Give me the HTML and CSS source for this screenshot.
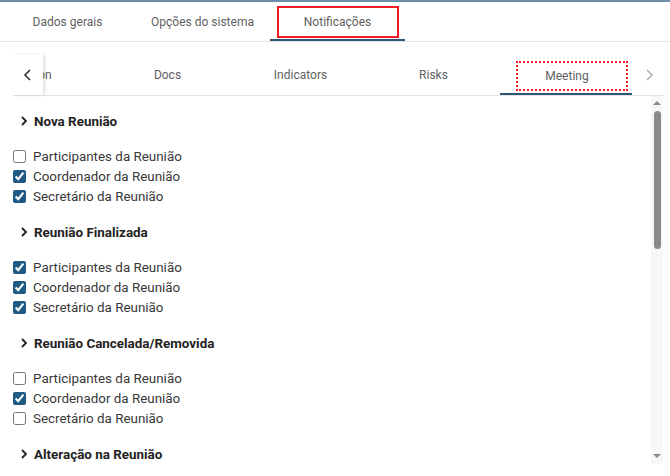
FILE: index.html
```html
<!DOCTYPE html>
<html lang="pt">
<head>
    <meta charset="UTF-8">
    <title>Notificações</title>
    <link rel="stylesheet" href="styles.css">
</head>
<body>
<div class="main-tabs">
    <div class="main-tab">Dados gerais</div>
    <div class="main-tab">Opções do sistema</div>
    <div class="main-tab active"><span class="mark-solid">Notificações</span></div>
</div>

<div class="panel">
    <div class="sub-tabs">
        <button class="nav prev">
            <svg width="9" height="12" viewBox="0 0 9 12"><path d="M7 1 L2 6 L7 11" fill="none" stroke="#333" stroke-width="1.6"/></svg>
        </button>
        <div class="sub-viewport">
            <div class="sub-strip">
                <div class="sub-tab">Action</div>
                <div class="sub-tab">Docs</div>
                <div class="sub-tab">Indicators</div>
                <div class="sub-tab">Risks</div>
                <div class="sub-tab active"><span class="mark-dotted">Meeting</span></div>
            </div>
        </div>
        <button class="nav next">
            <svg width="9" height="12" viewBox="0 0 9 12"><path d="M2 1 L7 6 L2 11" fill="none" stroke="#aaa" stroke-width="1.4"/></svg>
        </button>
    </div>

    <div class="content">
        <div class="list" id="list"></div>
        <div class="scrollbar">
            <div class="sb-arrow up"></div>
            <div class="sb-thumb"></div>
            <div class="sb-arrow down"></div>
        </div>
    </div>
</div>

<script>
    const sections = [
        { title: 'Nova Reunião', checks: [false, true, true] },
        { title: 'Reunião Finalizada', checks: [true, true, true] },
        { title: 'Reunião Cancelada/Removida', checks: [false, true, false] },
        { title: 'Alteração na Reunião', checks: [true, true, false] }
    ];
    const roles = ['Participantes da Reunião', 'Coordenador da Reunião', 'Secretário da Reunião'];
    const chevron = '<svg width="8" height="10" viewBox="0 0 8 10"><path d="M2 1 L6 5 L2 9" fill="none" stroke="#222" stroke-width="1.8"/></svg>';

    const list = document.getElementById('list');
    sections.forEach(function (s, n) {
        let html = '<div class="section"><div class="section-title">' + chevron + '<span>' + s.title + '</span></div>';
        if (n < sections.length - 1) {
            roles.forEach(function (r, i) {
                html += '<label class="check"><input type="checkbox"' + (s.checks[i] ? ' checked' : '') + '><span>' + r + '</span></label>';
            });
        }
        html += '</div>';
        list.insertAdjacentHTML('beforeend', html);
    });
</script>
</body>
</html>
```

FILE: styles.css
```css
body { margin: 0; font-family: Roboto, "Liberation Sans", Arial, sans-serif; color: #333; background: #fff; }

.main-tabs {
    display: flex;
    border-top: 2px solid #6b8eab;
    border-bottom: 1px solid #e4e4e4;
}
.main-tab {
    width: 135px;
    height: 39px;
    padding-top: 2px;
    box-sizing: border-box;
    display: flex;
    align-items: center;
    justify-content: center;
    font-size: 12px;
    color: #5f5f5f;
    border-bottom: 2px solid transparent;
}
.main-tab.active { border-bottom-color: #2b5676; }
.mark-solid {
    width: 122px;
    height: 32px;
    box-sizing: border-box;
    display: flex;
    align-items: center;
    justify-content: center;
    border: 2px solid #ee1c24;
    margin-top: 1px;
}

.panel { padding: 13px 6px 0 13px; }

.sub-tabs {
    display: flex;
    height: 40px;
    border-bottom: 1px solid #e4e4e4;
}
.nav {
    width: 30px;
    border: none;
    background: #fff;
    padding: 0;
    display: flex;
    align-items: center;
    justify-content: center;
}
.nav.prev { box-shadow: 2px 0 3px rgba(0, 0, 0, 0.12); position: relative; z-index: 1; padding-right: 2px; }
.nav.next { width: 32px; padding-left: 2px; }
.sub-viewport { flex: 1; overflow: hidden; }
.sub-strip { display: flex; margin-left: -75px; }
.sub-tab {
    flex: 0 0 133px;
    height: 40px;
    padding-top: 2px;
    box-sizing: border-box;
    display: flex;
    align-items: center;
    justify-content: center;
    font-size: 12px;
    color: #5f5f5f;
    border-bottom: 2px solid transparent;
}
.sub-tab.active { border-bottom-color: #2b5676; justify-content: flex-start; }
.mark-dotted {
    width: 112px;
    height: 30px;
    box-sizing: border-box;
    padding-right: 10px;
    display: flex;
    align-items: center;
    justify-content: center;
    border: 2px dotted #ee1c24;
    margin-left: 16px;
    margin-top: 1px;
}

.content { display: flex; height: 368px; }
.list {
    flex: 1;
    overflow: hidden;
    padding-top: 15px;
}
.section { padding-bottom: 16px; }
.section-title {
    display: flex;
    align-items: center;
    gap: 6px;
    height: 20px;
    padding-left: 7px;
    margin-bottom: 15px;
    font-size: 13.4px;
    font-weight: 700;
    color: #222;
}
.check {
    display: flex;
    align-items: center;
    height: 20px;
    font-size: 13.4px;
    color: #383838;
}
.check input {
    width: 13px;
    height: 13px;
    margin: 0 7px 0 0;
    accent-color: #1f5a85;
}

.scrollbar {
    width: 12px;
    margin-right: 1px;
    background: #f7f7f7;
    display: flex;
    flex-direction: column;
    align-items: center;
}
.sb-arrow {
    width: 0;
    height: 0;
    border-left: 4px solid transparent;
    border-right: 4px solid transparent;
}
.sb-arrow.up { border-bottom: 4px solid #8a8a8a; margin: 5px 0 6px; }
.sb-arrow.down { border-top: 4px solid #8a8a8a; margin: auto 0 6px; }
.sb-thumb {
    width: 7px;
    height: 138px;
    border-radius: 4px;
    background: #8a8a8a;
}
```
